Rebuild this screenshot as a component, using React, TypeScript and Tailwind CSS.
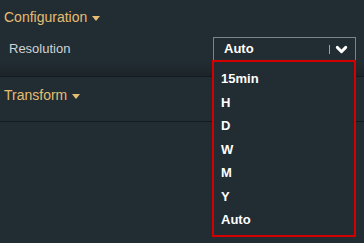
import { ChevronDown } from 'lucide-react';

const options = ['15min', 'H', 'D', 'W', 'M', 'Y', 'Auto'];

function Caret() {
  return (
    <svg className="ml-[5px] mt-[2px] w-[8px] h-[5px]" viewBox="0 0 8 5" aria-hidden="true">
      <path d="M0 0h8L4 5z" fill="currentColor" />
    </svg>
  );
}

export default function App() {
  return (
    <div
      className="relative w-[364px] h-[243px] overflow-hidden bg-[#222d33] text-[#d6d9dc]"
      style={{ fontFamily: '"Liberation Sans", Arial, sans-serif' }}
    >
      {/* Configuration */}
      <div className="h-[77px] bg-gradient-to-b from-[#222d33] from-80% to-[#1b2429] border-b border-[#141b1f]">
        <div className="flex items-center pl-[4px] pt-[7px] text-[14px] text-[#e5bd72] leading-[20px]">
          Configuration
          <Caret />
        </div>
        <div className="flex items-center justify-between pl-[9px] pr-[8px] mt-[10px]">
          <span className="text-[13px] text-[#cfd3d6]">Resolution</span>
          <div className="flex items-center justify-between w-[143px] h-[24px] border border-[#7c8489] pl-[10px] pr-[5px]">
            <span className="text-[13px] font-bold text-white">Auto</span>
            <div className="flex items-center gap-[3px]">
              <span className="w-px h-[9px] bg-[#9aa0a4]" />
              <ChevronDown className="w-[17px] h-[17px] text-white" strokeWidth={4} />
            </div>
          </div>
        </div>
      </div>

      {/* Transform */}
      <div className="h-[45px] border-b border-[#141b1f]">
        <div className="flex items-center pl-[4px] pt-[8px] text-[14px] text-[#e5bd72] leading-[20px]">
          Transform
          <Caret />
        </div>
      </div>

      {/* Open select menu */}
      <div className="absolute left-[212px] top-[60px] w-[144px] h-[177px] border-2 border-[#d40000] bg-[#222d33] pt-[5px] pl-[7px]">
        {options.map((o) => (
          <div key={o} className="h-[23.5px] flex items-center text-[13px] font-bold text-white">
            {o}
          </div>
        ))}
      </div>
    </div>
  );
}
